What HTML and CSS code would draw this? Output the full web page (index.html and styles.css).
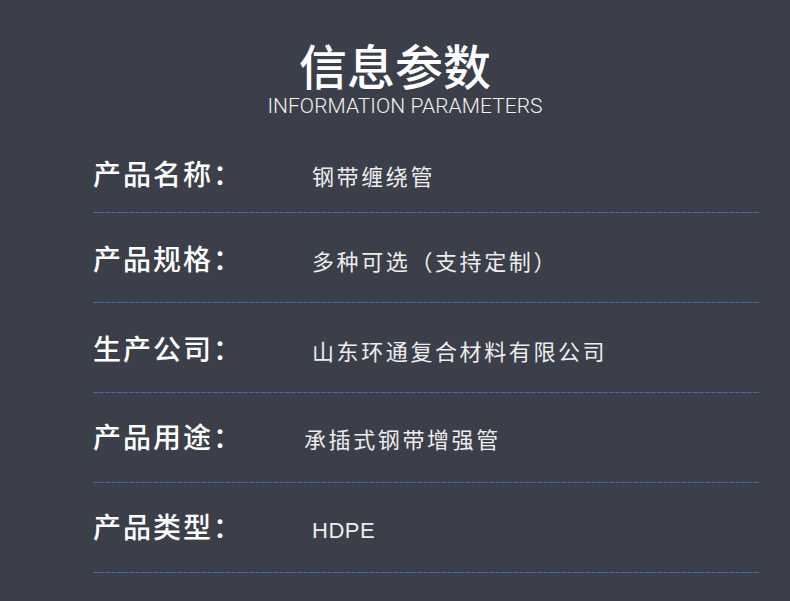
FILE: index.html
```html
<!DOCTYPE html>
<html lang="zh-CN">
<head>
<meta charset="utf-8">
<title>信息参数</title>
<link rel="stylesheet" href="styles.css">
</head>
<body>
<div class="page">
  <header class="head">
    <h1 class="title">信息参数</h1>
    <p class="subtitle">INFORMATION PARAMETERS</p>
  </header>
  <section class="table">
    <div class="row row--first">
      <span class="label">产品名称：</span>
      <span class="value">钢带缠绕管</span>
    </div>
    <div class="row">
      <span class="label">产品规格：</span>
      <span class="value">多种可选（支持定制）</span>
    </div>
    <div class="row">
      <span class="label">生产公司：</span>
      <span class="value">山东环通复合材料有限公司</span>
    </div>
    <div class="row row--tight">
      <span class="label">产品用途：</span>
      <span class="value value--shift">承插式钢带增强管</span>
    </div>
    <div class="row row--tight">
      <span class="label">产品类型：</span>
      <span class="value value--latin">HDPE</span>
    </div>
  </section>
</div>
</body>
</html>
```

FILE: styles.css
```css
html, body {
  margin: 0;
  padding: 0;
  background: #3b3f4a;
}

.page {
  width: 790px;
  height: 601px;
  overflow: hidden;
  background: #3b3f4a;
  color: #ffffff;
  font-family: "Noto Sans CJK SC", "Noto Sans", sans-serif;
}

.head {
  padding-top: 40px;
  text-align: center;
}

.title {
  margin: 0;
  font-size: 48px;
  line-height: 48px;
  font-weight: 500;
  color: #ffffff;
}

.subtitle {
  margin: 8px 0 0;
  padding-left: 20px;
  font-family: Roboto, "Liberation Sans", Arial, sans-serif;
  font-size: 21px;
  line-height: 20px;
  font-weight: 300;
  letter-spacing: 0.05px;
  color: #f2f2f2;
}

.table {
  margin: 7px 30px 0 93px;
}

.row {
  display: flex;
  align-items: baseline;
  box-sizing: border-box;
  height: 90px;
  padding-top: 30px;
  background-image: repeating-linear-gradient(to right, #4a68ad 0 5px, transparent 5px 6px);
  background-size: 100% 1px;
  background-position: left bottom;
  background-repeat: no-repeat;
}

.row--first {
  padding-top: 35px;
}

.row--tight {
  padding-top: 28px;
}

.label {
  flex: 0 0 219px;
  font-size: 28px;
  line-height: 30px;
  font-weight: 500;
  letter-spacing: 2px;
  color: #ffffff;
}

.value {
  font-size: 22px;
  line-height: 30px;
  font-weight: 400;
  letter-spacing: 2.6px;
  color: #ededed;
}

.value--shift {
  margin-left: -8px;
}

.value--latin {
  font-family: "Liberation Sans", Arial, sans-serif;
  letter-spacing: 0.5px;
}
```
